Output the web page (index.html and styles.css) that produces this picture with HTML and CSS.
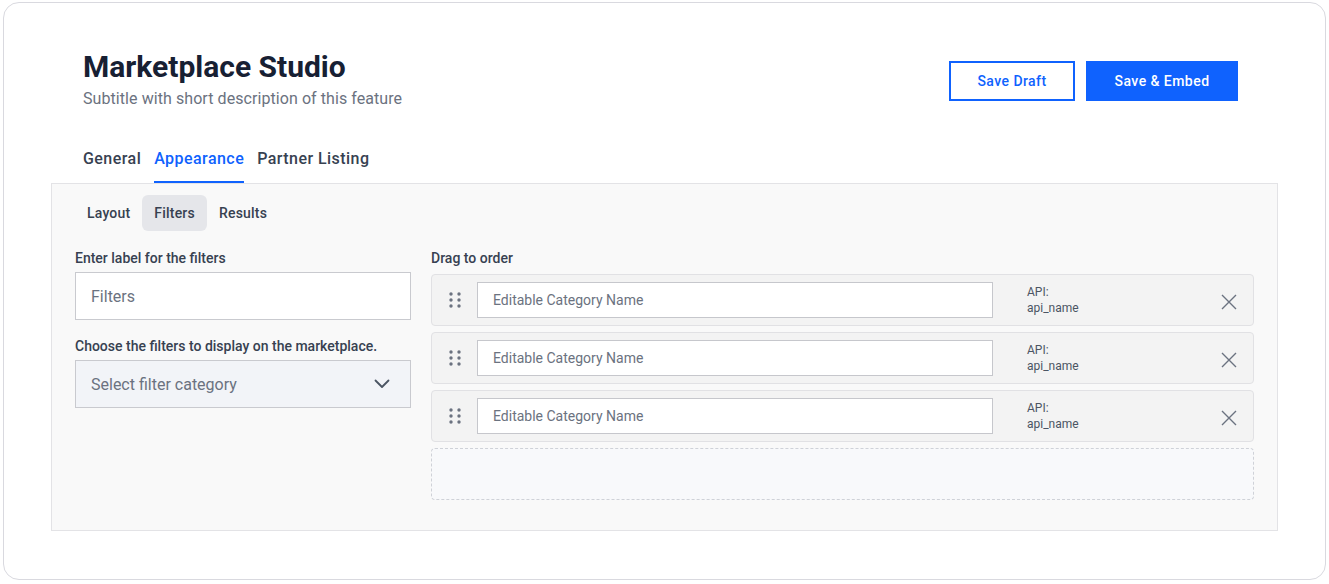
FILE: index.html
```html
<!DOCTYPE html>
<html>
<head>
<meta charset="utf-8">
<link rel="stylesheet" href="styles.css">
</head>
<body>
<div class="card">
  <div class="header">
    <div class="titles">
      <h1 class="title">Marketplace Studio</h1>
      <p class="subtitle">Subtitle with short description of this feature</p>
    </div>
    <div class="actions">
      <button class="btn btn-outline">Save Draft</button>
      <button class="btn btn-primary">Save &amp; Embed</button>
    </div>
  </div>
  <div class="tabs">
    <div class="tab">General</div>
    <div class="tab active">Appearance</div>
    <div class="tab">Partner Listing</div>
  </div>
  <div class="panel">
    <div class="subtabs">
      <div class="subtab">Layout</div>
      <div class="subtab active">Filters</div>
      <div class="subtab">Results</div>
    </div>
    <div class="columns">
      <div class="left">
        <div class="label">Enter label for the filters</div>
        <div class="field">Filters</div>
        <div class="label label-2">Choose the filters to display on the marketplace.</div>
        <div class="field select">
          <span>Select filter category</span>
          <svg class="chev" width="16" height="10" viewBox="0 0 16 10"><path d="M1.5 1.5 L8 8 L14.5 1.5" fill="none" stroke="#4b5563" stroke-width="1.8" stroke-linecap="round" stroke-linejoin="round"/></svg>
        </div>
      </div>
      <div class="right">
        <div class="label label-r">Drag to order</div>
        <div class="rows">
          <div class="row">
            <svg class="dots" width="12" height="16" viewBox="0 0 12 16"><circle cx="2" cy="2" r="1.7"/><circle cx="10" cy="2" r="1.7"/><circle cx="2" cy="8" r="1.7"/><circle cx="10" cy="8" r="1.7"/><circle cx="2" cy="14" r="1.7"/><circle cx="10" cy="14" r="1.7"/></svg>
            <div class="cat">Editable Category Name</div>
            <div class="api"><div>API:</div><div>api_name</div></div>
            <svg class="close" width="16" height="16" viewBox="0 0 16 16"><path d="M1 1 L15 15 M15 1 L1 15" stroke="#6b7280" stroke-width="1.4" fill="none"/></svg>
          </div>
          <div class="row">
            <svg class="dots" width="12" height="16" viewBox="0 0 12 16"><circle cx="2" cy="2" r="1.7"/><circle cx="10" cy="2" r="1.7"/><circle cx="2" cy="8" r="1.7"/><circle cx="10" cy="8" r="1.7"/><circle cx="2" cy="14" r="1.7"/><circle cx="10" cy="14" r="1.7"/></svg>
            <div class="cat">Editable Category Name</div>
            <div class="api"><div>API:</div><div>api_name</div></div>
            <svg class="close" width="16" height="16" viewBox="0 0 16 16"><path d="M1 1 L15 15 M15 1 L1 15" stroke="#6b7280" stroke-width="1.4" fill="none"/></svg>
          </div>
          <div class="row">
            <svg class="dots" width="12" height="16" viewBox="0 0 12 16"><circle cx="2" cy="2" r="1.7"/><circle cx="10" cy="2" r="1.7"/><circle cx="2" cy="8" r="1.7"/><circle cx="10" cy="8" r="1.7"/><circle cx="2" cy="14" r="1.7"/><circle cx="10" cy="14" r="1.7"/></svg>
            <div class="cat">Editable Category Name</div>
            <div class="api"><div>API:</div><div>api_name</div></div>
            <svg class="close" width="16" height="16" viewBox="0 0 16 16"><path d="M1 1 L15 15 M15 1 L1 15" stroke="#6b7280" stroke-width="1.4" fill="none"/></svg>
          </div>
          <div class="dropzone"></div>
        </div>
      </div>
    </div>
  </div>
</div>
</body>
</html>
```
FILE: styles.css
```css
* { box-sizing: border-box; }
html, body { margin: 0; padding: 0; background: #ffffff; }
body { font-family: Roboto, "Liberation Sans", sans-serif; color: #374151; }

.card {
  margin: 2px 3px 4px 3px;
  height: 578px;
  border: 1px solid #d9d9df;
  border-radius: 16px;
  padding: 45px 47px 0 47px;
  background: #fff;
}

.header {
  display: flex;
  justify-content: space-between;
  align-items: flex-start;
  padding: 0 40px 0 32px;
}
.title {
  margin: 0;
  font-size: 30px;
  line-height: 38px;
  font-weight: 700;
  color: #172033;
}
.subtitle {
  margin: 3px 0 0 0;
  font-size: 16px;
  line-height: 20px;
  color: #6b7280;
  letter-spacing: 0.07px;
}
.actions {
  display: flex;
  gap: 11px;
  margin-top: 13px;
}
.btn {
  height: 40px;
  font-family: Roboto, "Liberation Sans", sans-serif;
  font-size: 14px;
  font-weight: 500;
  letter-spacing: 0.45px;
  border: 2px solid #0f62fe;
  padding: 0;
  cursor: pointer;
}
.btn-outline { background: #fff; color: #0f62fe; width: 126px; }
.btn-primary { background: #0f62fe; color: #fff; width: 152px; }

.tabs {
  display: flex;
  gap: 13px;
  padding: 0 32px;
  margin-top: 40px;
}
.tab {
  font-size: 16px;
  line-height: 20px;
  font-weight: 500;
  color: #374151;
  padding-bottom: 12px;
  border-bottom: 2px solid transparent;
  letter-spacing: 0.45px;
}
.tab.active { color: #0f62fe; border-bottom-color: #0f62fe; }

.panel {
  border: 1px solid #e3e3e6;
  background: #f9f9f9;
  padding: 11px 23px 30px 23px;
}
.subtabs { display: flex; }
.subtab {
  font-size: 14px;
  line-height: 20px;
  font-weight: 500;
  color: #374151;
  padding: 8px 12px;
  border-radius: 6px;
  letter-spacing: 0.2px;
}
.subtab.active { background: #e5e6ea; }

.columns {
  display: flex;
  gap: 20px;
  margin-top: 19px;
}
.left { width: 336px; flex: none; }
.right { flex: 1; }
.label {
  font-size: 14px;
  line-height: 16px;
  font-weight: 500;
  color: #374151;
  margin-bottom: 6px;
}
.label-2 { margin-top: 18px; }
.label-r { margin-bottom: 8px; }

.field {
  height: 48px;
  border: 1px solid #c9cacf;
  background: #fff;
  padding: 0 15px;
  display: flex;
  align-items: center;
  font-size: 16px;
  color: #6b7280;
}
.field.select {
  background: #f2f4f8;
  justify-content: space-between;
}
.chev { margin-right: 5px; }

.rows { display: flex; flex-direction: column; gap: 6px; }
.row {
  height: 52px;
  border: 1px solid #e1e1e4;
  border-radius: 4px;
  background: #f3f3f3;
  display: flex;
  align-items: center;
  padding: 0 16px 0 17px;
}
.dots { fill: #6b7280; flex: none; }
.cat {
  width: 516px;
  height: 36px;
  margin-left: 16px;
  background: #fff;
  border: 1px solid #c6c7cc;
  display: flex;
  align-items: center;
  padding: 0 15px;
  font-size: 14px;
  color: #6b7280;
  flex: none;
}
.api {
  flex: 1;
  margin-left: 34px;
  font-size: 12px;
  line-height: 16px;
  color: #4b5563;
}
.close { flex: none; margin-top: 4px; }
.dropzone {
  height: 52px;
  border: 1px dashed #cfd2d8;
  border-radius: 4px;
  background: #f8f9fb;
}
```
